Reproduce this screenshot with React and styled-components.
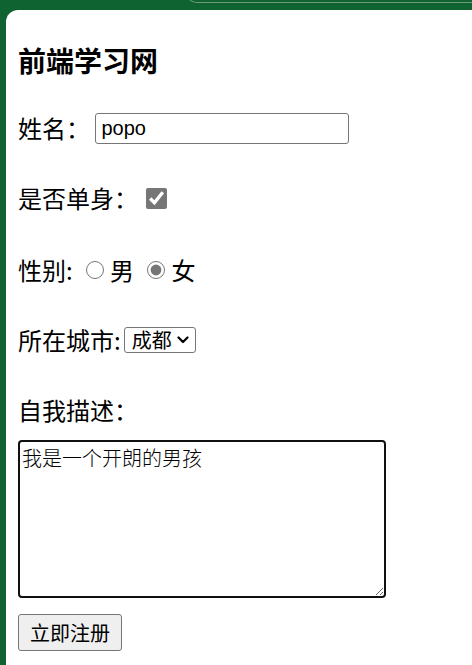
import React from "react";
import styled, { createGlobalStyle } from "styled-components";

const GlobalStyle = createGlobalStyle`
  html, body {
    margin: 0;
    padding: 0;
    background: #0f6331;
  }
  body {
    font-family: "Noto Sans CJK SC", "Noto Sans", sans-serif;
    color: #000;
  }
`;

const Screen = styled.div`
  display: flex;
  flex-direction: column;
  min-height: 100vh;
`;

const TopStrip = styled.div`
  display: flex;
  height: 10px;
  overflow: hidden;
`;

const TabEdge = styled.div`
  flex: 1;
  margin-left: 185px;
  margin-top: -9px;
  height: 11px;
  border-left: 1px solid #6f9a7c;
  border-bottom: 1px solid #6f9a7c;
  border-bottom-left-radius: 12px;
`;

const Panel = styled.div`
  flex: 1;
  margin-left: 6px;
  background: #fff;
  border-top-left-radius: 12px;
  padding: 32px 12px 12px;
`;

const Title = styled.h3`
  margin: 0;
  font-size: 28px;
  line-height: 36px;
  font-weight: 700;
`;

const Form = styled.form`
  display: flex;
  flex-direction: column;
  align-items: flex-start;
`;

const Field = styled.div`
  display: flex;
  align-items: center;
  height: 32px;
  margin-top: ${(p) => p.$space}px;
  font-size: 24px;
  line-height: 32px;
  white-space: pre;
`;

const TextInput = styled.input`
  box-sizing: border-box;
  width: 254px;
  height: 31px;
  margin: 0;
  padding: 1px 5px;
  border: 1px solid #767676;
  border-radius: 3px;
  font-family: "Liberation Sans", Arial, sans-serif;
  font-size: 20px;
  color: #000;
  outline: none;
`;

const Check = styled.input`
  width: 21px;
  height: 21px;
  margin: 0 0 0 3px;
  accent-color: #767676;
`;

const Radio = styled.input`
  width: 18px;
  height: 18px;
  margin: 0 6px 0 ${(p) => p.$left}px;
  accent-color: #767676;
`;

const Choice = styled.span`
  font-size: 24px;
`;

const SelectBox = styled.span`
  position: relative;
  display: inline-flex;
  margin-left: 3px;
`;

const Select = styled.select`
  box-sizing: border-box;
  appearance: none;
  width: 72px;
  height: 26px;
  margin: 0;
  padding: 0 0 0 7px;
  border: 1px solid #767676;
  border-radius: 3px;
  background: #fff;
  font-family: "Noto Sans CJK SC", sans-serif;
  font-size: 20px;
  line-height: 24px;
  color: #000;
`;

const Chevron = styled.svg`
  position: absolute;
  right: 7px;
  top: 9px;
  width: 12px;
  height: 8px;
  pointer-events: none;
`;

const Describe = styled.textarea`
  box-sizing: border-box;
  width: 368px;
  height: 158px;
  margin-top: 14px;
  padding: 3px 2px;
  border: 2px solid #101010;
  border-radius: 4px;
  outline: none;
  font-family: "Noto Sans CJK SC", serif;
  font-weight: 300;
  font-size: 20px;
  line-height: 26px;
  color: #000;
`;

const Submit = styled.button`
  box-sizing: border-box;
  width: 104px;
  height: 37px;
  margin-top: 16px;
  padding: 0;
  border: 1px solid #767676;
  border-radius: 3px;
  background: #efefef;
  font-family: "Noto Sans CJK SC", sans-serif;
  font-size: 20px;
  color: #000;
`;

export default function App() {
  return (
    <>
      <GlobalStyle />
      <Screen>
        <TopStrip>
          <TabEdge />
        </TopStrip>
        <Panel>
          <Title>前端学习网</Title>
          <Form onSubmit={(e) => e.preventDefault()}>
            <Field $space={34}>
              {"姓名： "}
              <TextInput type="text" defaultValue="popo" />
            </Field>
            <Field $space={38}>
              {"是否单身： "}
              <Check type="checkbox" defaultChecked />
            </Field>
            <Field $space={40}>
              {"性别: "}
              <Radio type="radio" name="sex" $left={8} />
              <Choice>男 </Choice>
              <Radio type="radio" name="sex" $left={8} defaultChecked />
              <Choice>女</Choice>
            </Field>
            <Field $space={38}>
              {"所在城市:"}
              <SelectBox>
                <Select defaultValue="成都">
                  <option>北京</option>
                  <option>成都</option>
                  <option>上海</option>
                </Select>
                <Chevron viewBox="0 0 12 8">
                  <path d="M1.5 1.5 L6 6 L10.5 1.5" fill="none" stroke="#000" strokeWidth="2.2" strokeLinecap="round" strokeLinejoin="round" />
                </Chevron>
              </SelectBox>
            </Field>
            <Field $space={38}>{"自我描述："}</Field>
            <Describe defaultValue="我是一个开朗的男孩" />
            <Submit type="submit">立即注册</Submit>
          </Form>
        </Panel>
      </Screen>
    </>
  );
}
